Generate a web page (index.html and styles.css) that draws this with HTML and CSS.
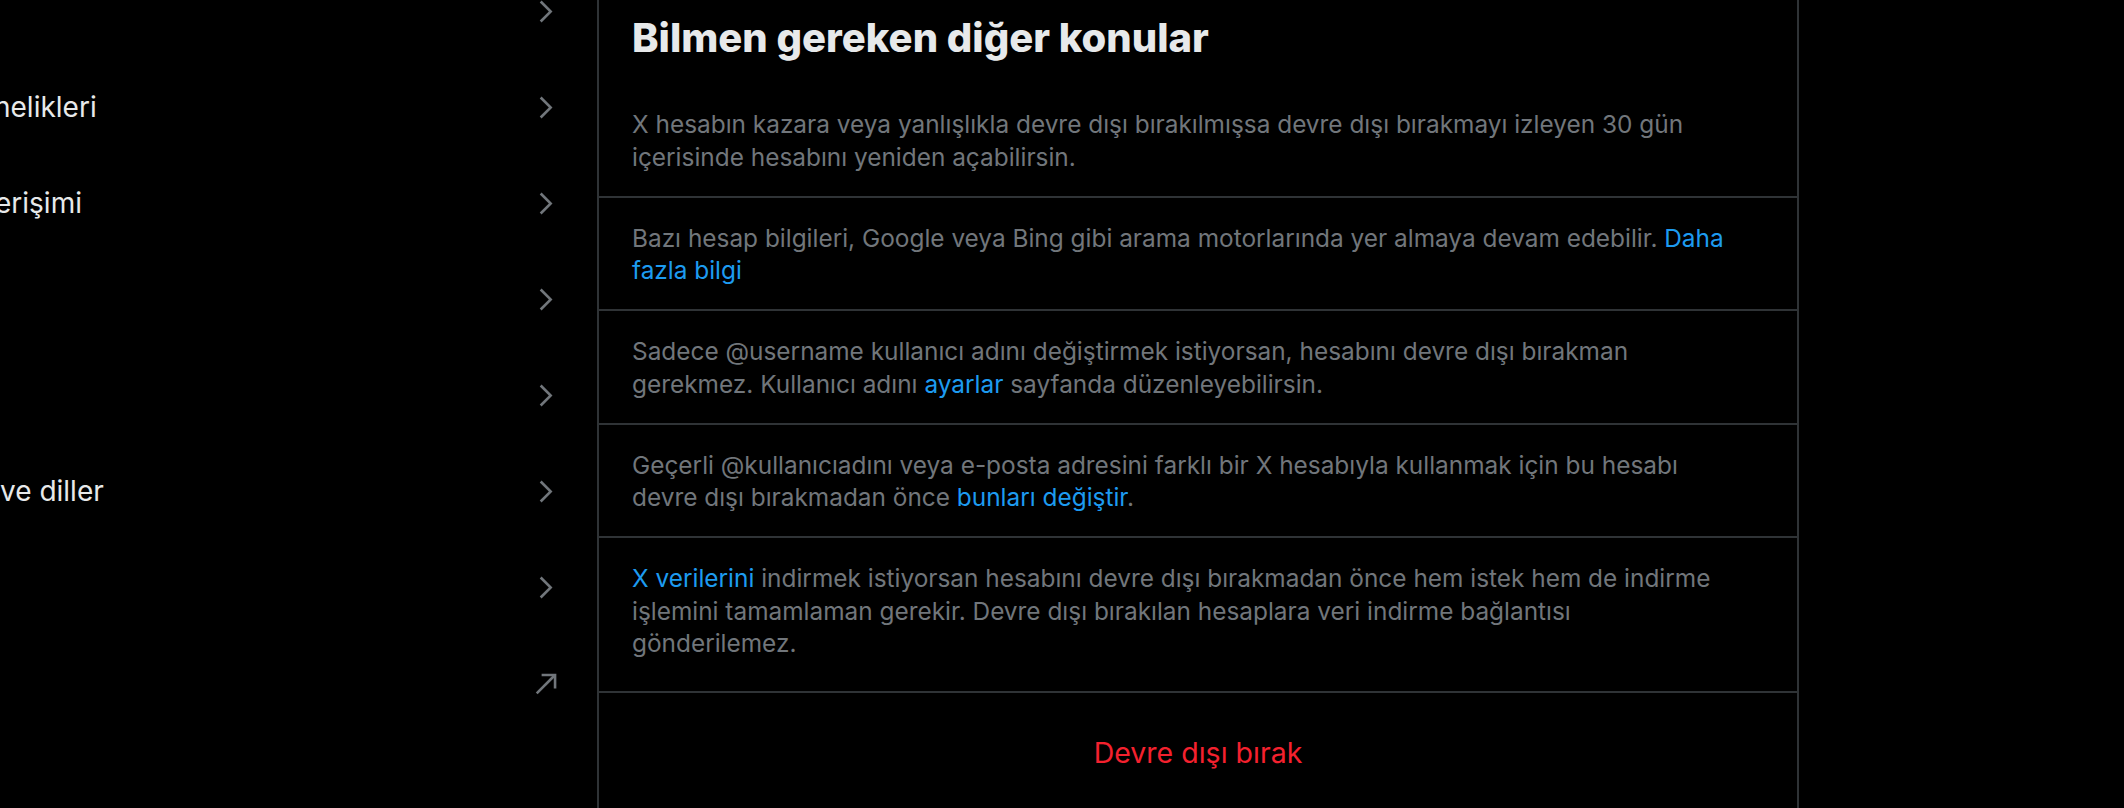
FILE: index.html
```html
<!DOCTYPE html>
<html lang="tr">
<head>
<meta charset="utf-8">
<title>Hesabını devre dışı bırak</title>
<link rel="stylesheet" href="styles.css">
</head>
<body>
<div class="page">
  <nav class="sidebar">
    <ul class="nav">
      <li class="nav-row"><span class="nav-label"></span><svg class="icon" viewBox="0 0 24 24"><path d="M14.586 12L7.543 4.96l1.414-1.42L17.414 12l-8.457 8.46-1.414-1.42L14.586 12z"/></svg></li>
      <li class="nav-row"><span class="nav-label cut-lg">nelikleri</span><svg class="icon" viewBox="0 0 24 24"><path d="M14.586 12L7.543 4.96l1.414-1.42L17.414 12l-8.457 8.46-1.414-1.42L14.586 12z"/></svg></li>
      <li class="nav-row"><span class="nav-label cut-md">erişimi</span><svg class="icon" viewBox="0 0 24 24"><path d="M14.586 12L7.543 4.96l1.414-1.42L17.414 12l-8.457 8.46-1.414-1.42L14.586 12z"/></svg></li>
      <li class="nav-row"><span class="nav-label"></span><svg class="icon" viewBox="0 0 24 24"><path d="M14.586 12L7.543 4.96l1.414-1.42L17.414 12l-8.457 8.46-1.414-1.42L14.586 12z"/></svg></li>
      <li class="nav-row"><span class="nav-label"></span><svg class="icon" viewBox="0 0 24 24"><path d="M14.586 12L7.543 4.96l1.414-1.42L17.414 12l-8.457 8.46-1.414-1.42L14.586 12z"/></svg></li>
      <li class="nav-row"><span class="nav-label cut-sm">ve diller</span><svg class="icon" viewBox="0 0 24 24"><path d="M14.586 12L7.543 4.96l1.414-1.42L17.414 12l-8.457 8.46-1.414-1.42L14.586 12z"/></svg></li>
      <li class="nav-row"><span class="nav-label"></span><svg class="icon" viewBox="0 0 24 24"><path d="M14.586 12L7.543 4.96l1.414-1.42L17.414 12l-8.457 8.46-1.414-1.42L14.586 12z"/></svg></li>
      <li class="nav-row"><span class="nav-label"></span><svg class="icon icon-stroke" viewBox="0 0 24 24"><path d="M5.2 19.6L18.6 6.2"/><path d="M9 5.4h10.4v10.4"/></svg></li>
    </ul>
  </nav>
  <main class="main">
    <h2 class="title">Bilmen gereken diğer konular</h2>
    <p class="item">X hesabın kazara veya yanlışlıkla devre dışı bırakılmışsa devre dışı bırakmayı izleyen 30 gün içerisinde hesabını yeniden açabilirsin.</p>
    <p class="item">Bazı hesap bilgileri, Google veya Bing gibi arama motorlarında yer almaya devam edebilir. <a class="link" href="#">Daha fazla bilgi</a></p>
    <p class="item">Sadece @username kullanıcı adını değiştirmek istiyorsan, hesabını devre dışı bırakman gerekmez. Kullanıcı adını <a class="link" href="#">ayarlar</a> sayfanda düzenleyebilirsin.</p>
    <p class="item">Geçerli @kullanıcıadını veya e-posta adresini farklı bir X hesabıyla kullanmak için bu hesabı devre dışı bırakmadan önce <a class="link" href="#">bunları değiştir</a>.</p>
    <p class="item item-last"><a class="link" href="#">X verilerini</a> indirmek istiyorsan hesabını devre dışı bırakmadan önce hem istek hem de indirme işlemini tamamlaman gerekir. Devre dışı bırakılan hesaplara veri indirme bağlantısı gönderilemez.</p>
    <div class="action"><button class="danger" type="button">Devre dışı bırak</button></div>
  </main>
</div>
</body>
</html>
```

FILE: styles.css
```css
html, body {
  margin: 0;
  padding: 0;
  background: #000;
  height: 808px;
  overflow: hidden;
}

body {
  font-family: Inter, Roboto, "Liberation Sans", Arial, sans-serif;
  color: #e7e9ea;
}

.page {
  display: flex;
  align-items: flex-start;
  height: 808px;
  overflow: hidden;
}

.sidebar {
  width: 597px;
  flex-shrink: 0;
  overflow: hidden;
}

.nav {
  list-style: none;
  margin: -37px 0 0 0;
  padding: 0;
}

.nav-row {
  height: 96px;
  display: flex;
  align-items: center;
  justify-content: space-between;
  padding-right: 36px;
}

.nav-label {
  font-size: 28px;
  color: #e7e9ea;
  white-space: nowrap;
}

.cut-lg { margin-left: -6px; }
.cut-md { margin-left: -5px; }
.cut-sm { margin-left: 0; }

.icon {
  width: 31px;
  height: 31px;
  fill: #71767b;
  flex-shrink: 0;
}

.icon-stroke {
  fill: none;
  stroke: #71767b;
  stroke-width: 2;
}

.main {
  width: 1202px;
  flex-shrink: 0;
  box-sizing: border-box;
  border-left: 2px solid #2f3336;
  border-right: 2px solid #2f3336;
  min-height: 808px;
}

.title {
  margin: 0;
  padding: 14px 33px 22px;
  font-size: 40px;
  line-height: 48px;
  font-weight: 800;
  color: #e7e9ea;
}

.item {
  margin: 0;
  padding: 24px 67px 22.6px 33px;
  font-size: 24.4px;
  line-height: 32.5px;
  color: #71767b;
  border-bottom: 2px solid #2f3336;
}

.item-last {
  padding-bottom: 31.5px;
}

.link {
  color: #1d9bf0;
  text-decoration: none;
}

.action {
  display: flex;
  justify-content: center;
  padding-top: 42px;
}

.danger {
  background: none;
  border: 0;
  padding: 0;
  font-family: inherit;
  font-size: 28.5px;
  line-height: 36px;
  color: #f4212e;
  cursor: pointer;
}
```
